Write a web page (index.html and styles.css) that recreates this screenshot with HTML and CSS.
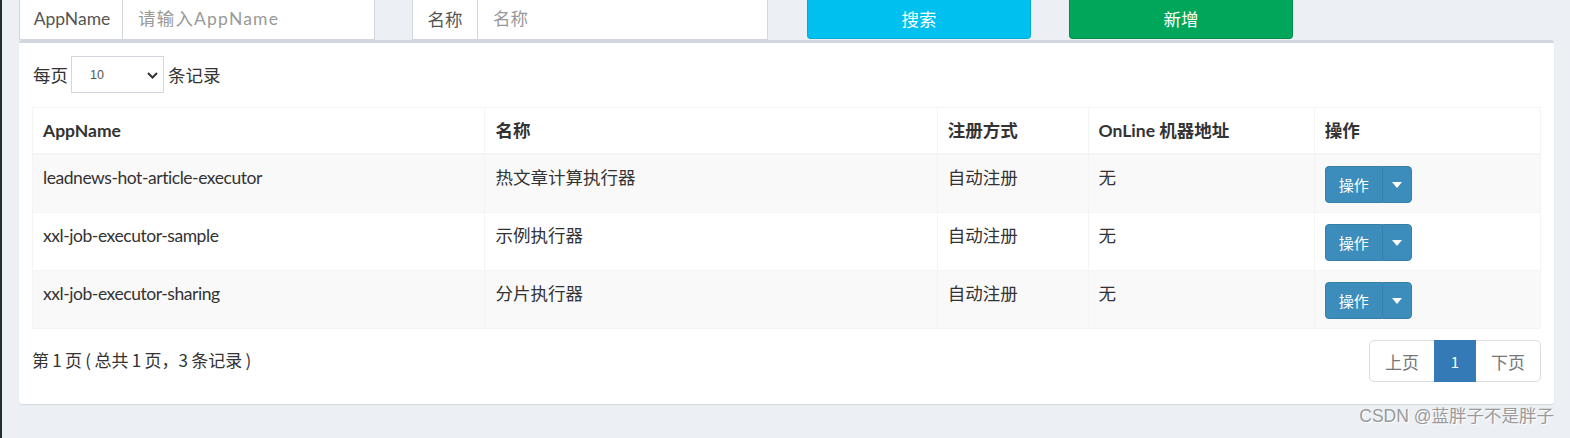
FILE: index.html
```html
<!DOCTYPE html>
<html lang="zh-CN">
<head>
<meta charset="utf-8">
<title>执行器管理</title>
<link rel="stylesheet" href="styles.css">
</head>
<body>
<div class="page">
  <div class="edge"></div>
  <div class="content">
    <div class="toolbar">
      <div class="input-group g1">
        <span class="addon addon1">AppName</span>
        <input class="field field1" type="text" placeholder="请输入AppName">
      </div>
      <div class="input-group g2">
        <span class="addon addon2">名称</span>
        <input class="field" type="text" placeholder="名称">
      </div>
      <button class="btn btn-search">搜索</button>
      <button class="btn btn-add">新增</button>
    </div>
    <div class="box">
      <div class="length-row">
        <span>每页</span>
        <span class="select-wrap">
          <select class="len-select"><option>10</option><option>25</option><option>50</option></select>
          <svg class="chev" width="11" height="7" viewBox="0 0 11 7"><path d="M1 1l4.5 4.5L10 1" fill="none" stroke="#333" stroke-width="2"/></svg>
        </span>
        <span>条记录</span>
      </div>
      <table class="grid">
        <colgroup>
          <col class="c30"><col class="c30"><col class="c10"><col class="c15"><col class="c15">
        </colgroup>
        <thead>
          <tr><th>AppName</th><th>名称</th><th>注册方式</th><th>OnLine 机器地址</th><th>操作</th></tr>
        </thead>
        <tbody>
          <tr class="odd"><td class="app">leadnews-hot-article-executor</td><td>热文章计算执行器</td><td>自动注册</td><td>无</td><td><div class="btn-group"><span class="op">操作</span><span class="dd"><svg width="10" height="6" viewBox="0 0 10 6"><path d="M0 0h10L5 6z" fill="#fff"/></svg></span></div></td></tr>
          <tr><td class="app">xxl-job-executor-sample</td><td>示例执行器</td><td>自动注册</td><td>无</td><td><div class="btn-group"><span class="op">操作</span><span class="dd"><svg width="10" height="6" viewBox="0 0 10 6"><path d="M0 0h10L5 6z" fill="#fff"/></svg></span></div></td></tr>
          <tr class="odd"><td class="app">xxl-job-executor-sharing</td><td>分片执行器</td><td>自动注册</td><td>无</td><td><div class="btn-group"><span class="op">操作</span><span class="dd"><svg width="10" height="6" viewBox="0 0 10 6"><path d="M0 0h10L5 6z" fill="#fff"/></svg></span></div></td></tr>
        </tbody>
      </table>
      <div class="footer-row">
        <div class="info">第 1 页 ( 总共 1 页，3 条记录 )</div>
        <ul class="pagination">
          <li class="pg">上页</li>
          <li class="pg active">1</li>
          <li class="pg">下页</li>
        </ul>
      </div>
    </div>
  </div>
</div>
<div class="watermark">CSDN @蓝胖子不是胖子</div>
</body>
</html>
```
FILE: styles.css
```css
* { box-sizing: border-box; }
html, body { margin: 0; padding: 0; }
body {
  background: #ecf0f5;
  font-family: "Lato", "Noto Sans CJK SC", sans-serif;
  font-size: 17.5px;
  color: #333;
  width: 1570px;
  height: 438px;
  overflow: hidden;
  position: relative;
}
.page { display: flex; height: 438px; }
.edge { width: 2px; background: #222d32; flex: none; }
.content { padding-left: 17px; width: 1550px; }

.toolbar { display: flex; align-items: flex-start; height: 40px; }
.input-group { display: flex; height: 40px; border: 1px solid #d2d6de; border-top: none; background: #fff; }
.g1 { width: 356px; }
.g2 { width: 356px; margin-left: 37px; }
.addon {
  display: flex; align-items: center; justify-content: center;
  color: #555; border-right: 1px solid #d2d6de; flex: none; padding-bottom: 2px;
}
.addon1 { width: 103px; padding-left: 2px; }
.addon2 { width: 65px; }
.field {
  flex: 1; min-width: 0; border: none; outline: none; background: #fff;
  font: inherit; color: #555; padding: 0 0 2px 15px;
}
.field1 { letter-spacing: 1.2px; }
.field::placeholder { color: #999; }
.btn {
  border: 1px solid transparent; border-top: none; border-radius: 0 0 4px 4px;
  height: 39px; width: 224px; color: #fff; font: inherit; font-family: "Noto Sans CJK SC", sans-serif;
  padding: 0 0 2px; cursor: pointer;
}
.btn-search { background: #00c0ef; border-color: #00acd6; margin-left: 39px; }
.btn-add { background: #00a65a; border-color: #008d4c; margin-left: 38px; }

.box {
  width: 1535px;
  background: #fff;
  border-top: 3px solid #d2d6de;
  border-radius: 3px;
  box-shadow: 0 1px 1px rgba(0,0,0,0.1);
  padding: 13px 13px 22px 13px;
}
.length-row { display: flex; align-items: center; height: 37px; padding-left: 1px; }
.select-wrap { position: relative; margin: 0 4px 0 3px; }
.len-select {
  appearance: none; -webkit-appearance: none;
  width: 93px; height: 37px; border: 1px solid #d2d6de; border-radius: 0;
  background: #fff; font-family: "Liberation Sans", sans-serif; font-size: 12.5px; color: #555;
  padding: 0 0 0 18px; outline: none;
}
.chev { position: absolute; right: 6px; top: 16px; pointer-events: none; }

.grid {
  width: 1509px; margin-top: 14px; border-collapse: collapse; table-layout: fixed;
  border: 1px solid #f4f4f4;
}
.c30 { width: 30%; }
.c10 { width: 10%; }
.c15 { width: 15%; }
.grid th, .grid td {
  border: 1px solid #f4f4f4; padding: 10px 10px 9px 10px; text-align: left; vertical-align: top;
  line-height: 25px;
}
.grid th { font-weight: 700; border-bottom: 2px solid #f4f4f4; padding-bottom: 10px; }
.grid td { height: 57px; }
.grid tr.odd td { background: #f9f9f9; }
.grid td.app { letter-spacing: -0.45px; }

.btn-group { display: inline-flex; height: 37px; margin-top: 1px; border-radius: 4px; overflow: hidden; }
.op {
  display: flex; align-items: center; justify-content: center;
  width: 57px; background: #3c8dbc; color: #fff; font-size: 15px;
  border: 1px solid #367fa9; border-right: none; border-radius: 4px 0 0 4px;
  font-family: "Noto Sans CJK SC", sans-serif;
}
.dd {
  display: flex; align-items: center; justify-content: center;
  width: 30px; background: #3c8dbc; border: 1px solid #367fa9; border-radius: 0 4px 4px 0;
}

.footer-row { display: flex; justify-content: space-between; align-items: flex-start; margin-top: 11px; }
.info { margin-top: 7px; font-family: "Noto Sans CJK SC", sans-serif; font-size: 17px; color: #333; word-spacing: -0.5px; }
.pagination { list-style: none; margin: 0; padding: 0; display: flex; height: 42px; }
.pg {
  display: flex; align-items: center; justify-content: center;
  height: 42px; border: 1px solid #ddd; margin-left: -1px; color: #777; background: #fff;
  font-family: "Noto Sans CJK SC", sans-serif; font-size: 17px;
}
.pg:first-child { width: 66px; border-radius: 5px 0 0 5px; margin-left: 0; }
.pg:last-child { width: 66px; border-radius: 0 5px 5px 0; }
.pg.active { width: 42px; background: #337ab7; border-color: #337ab7; color: #fff; position: relative; z-index: 1; font-size: 15px; }

.watermark {
  position: absolute; right: 16px; top: 402px;
  font-family: "Liberation Sans", "Noto Sans CJK SC", sans-serif; font-size: 17.5px;
  color: #9a9a9a; text-shadow: 1px 1px 0 #fff;
}
```
